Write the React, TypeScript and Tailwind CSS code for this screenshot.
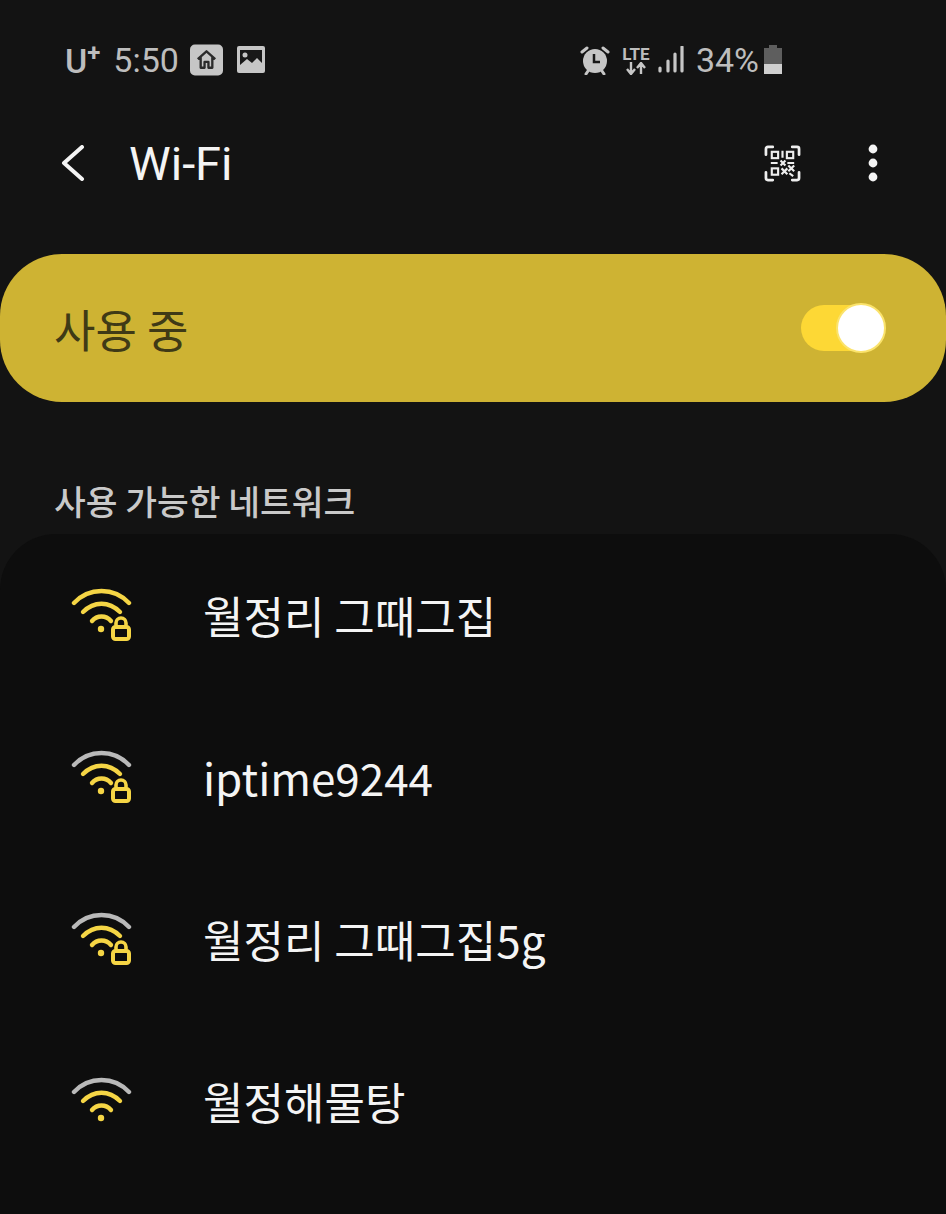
const KO = "font-['Noto_Sans_CJK_KR','Noto_Sans',sans-serif]";
const GOLD = "#f5d545";
const GREY = "#b9b9b9";

function WifiIcon({ outer, middle, locked }: { outer: string; middle: string; locked: boolean }) {
  return (
    <svg width="62" height="54" viewBox="0 0 62 54" fill="none" strokeLinecap="round" className="shrink-0">
      {/* the open icon sits a little lower than the locked ones */}
      <g transform={locked ? undefined : "translate(0 3)"}>
        <path d="M4 15 C19 -1 44 -1 59 15" stroke={outer} strokeWidth="4.4" />
        <path d="M13 24 C24 13 39 13 50 24" stroke={middle} strokeWidth="4.4" />
        <path d="M22 33 C27 27 36 27 41 33" stroke={GOLD} strokeWidth="4.4" />
        <circle cx="31" cy="41" r="3.2" fill={GOLD} />
      </g>
      {locked && (
        <g>
          <rect x="43" y="39" width="16" height="12" rx="2.5" fill="#0d0d0d" stroke={GOLD} strokeWidth="4" />
          <path d="M46 37 V35 a5 5 0 0 1 10 0 V37" stroke={GOLD} strokeWidth="3.6" />
        </g>
      )}
    </svg>
  );
}

function NetworkRow({ name, outer, middle, locked }: { name: string; outer: string; middle: string; locked: boolean }) {
  return (
    <div className="flex h-[162px] items-center pl-[70px]">
      <WifiIcon outer={outer} middle={middle} locked={locked} />
      <span className={`ml-[71px] text-[44px] leading-none text-[#f4f4f4] ${KO}`}>{name}</span>
    </div>
  );
}

function StatusBar() {
  return (
    <div className="flex h-[60px] items-center justify-between pl-[65px] pr-[163px] text-[#bdbdbd]">
      <div className="flex items-center">
        <span className="flex font-['Roboto',sans-serif] text-[34px] font-medium leading-none">
          U<span className="-mt-[3px] text-[24px] font-bold leading-none">+</span>
        </span>
        <span className="-mt-[2px] ml-[13px] font-['Roboto',sans-serif] text-[34px] leading-none">5:50</span>
        <svg width="33" height="32" viewBox="0 0 34 32" className="-mt-[3px] ml-[11px]">
          <rect width="34" height="32" rx="5" fill="#c6c6c6" />
          <path d="M8 15 L17 7 L26 15 M11 13 V24 H15 V18 H19 V24 H23 V13" fill="none" stroke="#2b2b2b" strokeWidth="2.4" strokeLinejoin="round" />
        </svg>
        <svg width="28" height="28" viewBox="0 0 28 28" className="-mt-[3px] ml-[14px]">
          <rect width="28" height="27" rx="2" fill="#c6c6c6" />
          <rect x="3" y="4" width="22" height="19" fill="#181818" />
          <circle cx="8" cy="9" r="2.5" fill="#c6c6c6" />
          <path d="M3 23 V19 L10 13 L15 17 L20 12 L25 17 V23 Z" fill="#c6c6c6" />
        </svg>
      </div>
      <div className="-mt-[2px] flex items-center">
        <svg width="30" height="30" viewBox="0 0 30 30">
          <circle cx="15" cy="16" r="12" fill="#c6c6c6" />
          <path d="M14 9 V17 H20" fill="none" stroke="#181818" strokeWidth="2.5" />
          <path d="M2 7 L7 3 M28 7 L23 3 M8 26 L6 29 M22 26 L24 29" stroke="#c6c6c6" strokeWidth="3" strokeLinecap="round" />
        </svg>
        <div className="ml-[12px] flex w-[28px] flex-col items-center">
          <span className="font-['Roboto',sans-serif] text-[17px] font-bold leading-[16px]">LTE</span>
          <svg width="22" height="13" viewBox="0 0 22 13">
            <path d="M6 0 V11 M2 7 L6 12 L10 7 M16 12 V1 M12 6 L16 1 L20 6" fill="none" stroke="#c6c6c6" strokeWidth="2.4" />
          </svg>
        </div>
        <svg width="26" height="28" viewBox="0 0 26 28" className="ml-[8px]">
          <path d="M2 22 V25 M10 15 V25 M17 8 V25 M24 1 V25" stroke="#c6c6c6" strokeWidth="3.2" strokeLinecap="round" />
        </svg>
        <span className="ml-[12px] font-['Roboto',sans-serif] text-[34px] leading-none">34%</span>
        <svg width="20" height="30" viewBox="0 0 20 30" className="ml-[4px]">
          <path d="M6 0 H14 V3 H19 V29 H1 V3 H6 Z" fill="#5e5e5e" />
          <rect x="1" y="19" width="18" height="10" fill="#cfcfcf" />
        </svg>
      </div>
    </div>
  );
}

export default function App() {
  return (
    <div className="flex h-[1214px] w-[946px] flex-col overflow-hidden bg-[#131313]">
      <div className="h-[31px]" />
      <StatusBar />
      <header className="mt-[42px] flex h-[60px] items-center justify-between pl-[60px] pr-[68px]">
        <div className="flex items-center">
          <svg width="26" height="36" viewBox="0 0 26 36" fill="none">
            <path d="M22 2 L4 18 L22 34" stroke="#f4f4f4" strokeWidth="4" strokeLinecap="round" strokeLinejoin="round" />
          </svg>
          <h1 className="ml-[43px] font-['Roboto',sans-serif] text-[47px] leading-none text-[#f4f4f4]">Wi-Fi</h1>
        </div>
        <div className="flex items-center">
          <svg width="37" height="37" viewBox="0 0 38 38" fill="none" stroke="#eeeeee">
            <path d="M2 10 V4 a2 2 0 0 1 2-2 H9 M29 2 H34 a2 2 0 0 1 2 2 V10 M2 28 V34 a2 2 0 0 0 2 2 H9 M29 36 H34 a2 2 0 0 0 2-2 V28" strokeWidth="2.8" strokeLinecap="round" />
            <rect x="8" y="7" width="6.5" height="6.5" strokeWidth="2.2" />
            <rect x="23.5" y="7" width="6.5" height="6.5" strokeWidth="2.2" />
            <rect x="8" y="24" width="6.5" height="6.5" strokeWidth="2.2" />
            <path d="M19 6 V13 M7 18.5 H14 M17 16 L22 21 M22 16 L17 21 M24 18.5 H31 M18 24 L24 30 M24 24 L18 30 M25 21 L31 27 M31 21 L25 27 M26 29 L30 32" strokeWidth="2.2" />
          </svg>
          <svg width="10" height="38" viewBox="0 0 10 38" fill="#f4f4f4" className="ml-[67px]">
            <circle cx="5" cy="5" r="4.4" />
            <circle cx="5" cy="19" r="4.4" />
            <circle cx="5" cy="33" r="4.4" />
          </svg>
        </div>
      </header>
      <section className="mt-[61px] flex h-[148px] items-center justify-between rounded-[62px] bg-[#ceb333] pl-[54px] pr-[61px]">
        <span className={`text-[45px] leading-none text-[#3f3a16] ${KO}`}>사용 중</span>
        <div className="relative h-[46px] w-[84px] rounded-full bg-[#fdd835]">
          <div className="absolute -right-[1px] -top-[2px] h-[50px] w-[50px] rounded-full border-[2px] border-[#fbe36c] bg-white" />
        </div>
      </section>
      <h2 className={`mt-[78px] pl-[54px] text-[34.5px] font-medium leading-[40px] text-[#c9c9c9] ${KO}`}>사용 가능한 네트워크</h2>
      <main className="mt-[14px] flex-1 rounded-t-[56px] bg-[#0d0d0d]">
        <NetworkRow name="월정리 그때그집" outer={GOLD} middle={GOLD} locked />
        <NetworkRow name="iptime9244" outer={GREY} middle={GOLD} locked />
        <NetworkRow name="월정리 그때그집5g" outer={GREY} middle={GOLD} locked />
        <NetworkRow name="월정해물탕" outer={GREY} middle={GOLD} locked={false} />
      </main>
    </div>
  );
}
